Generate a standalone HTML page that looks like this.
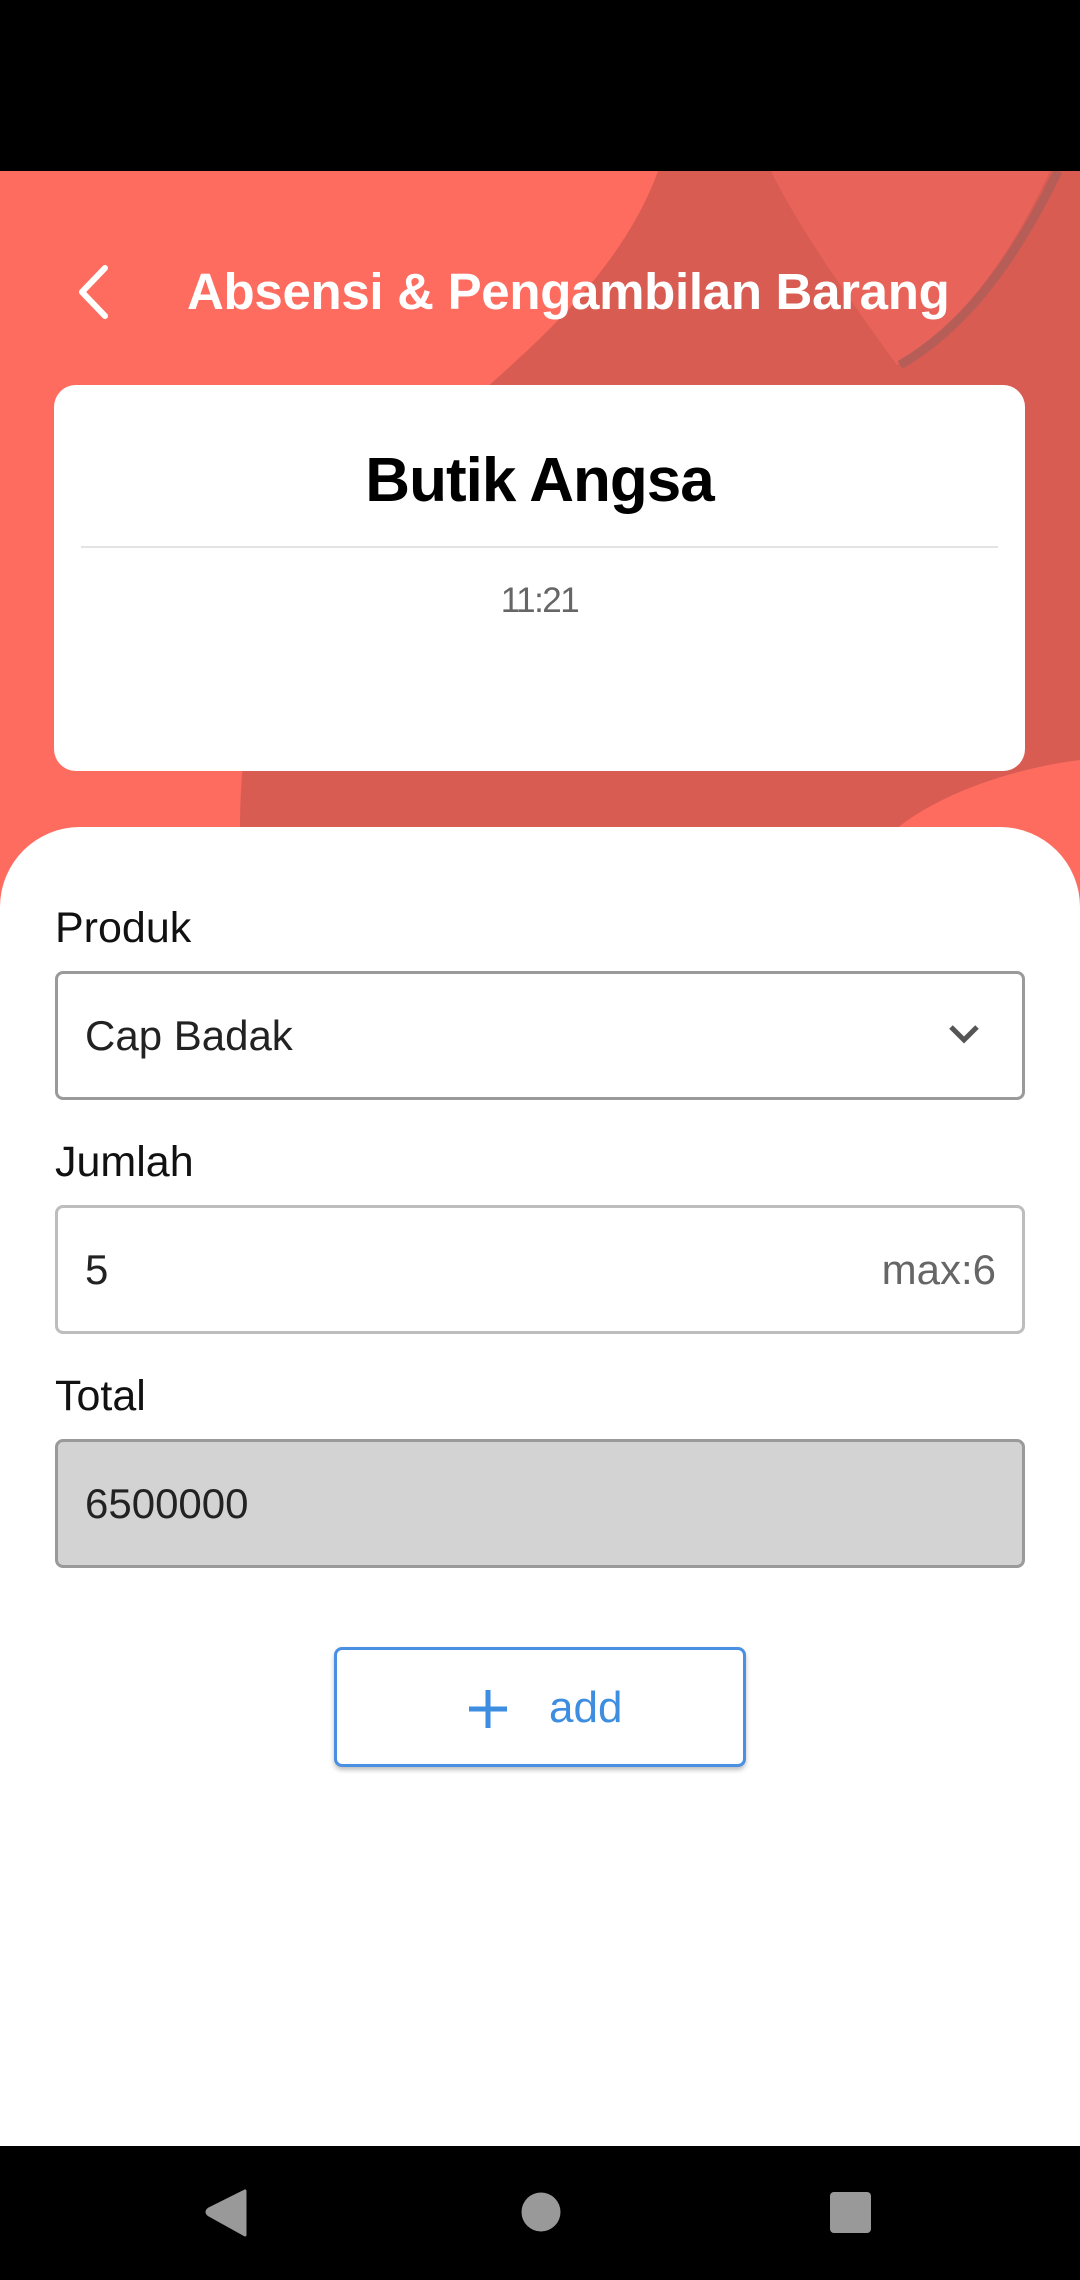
<!DOCTYPE html>
<html><head><meta charset="utf-8"><style>
*{margin:0;padding:0;box-sizing:border-box}
body{width:1080px;height:2280px;position:relative;overflow:hidden;background:#fff;font-family:"Liberation Sans",sans-serif}
.abs{position:absolute}
.lbl{position:absolute;left:55px;font-size:43px;color:#111}
.inp{position:absolute;left:55px;width:970px;height:129px;border:3px solid #9a9a9a;border-radius:8px;background:#fff}
.inp span{position:absolute;left:27px;top:50%;transform:translateY(-50%);font-size:42px;color:#222}
</style></head><body>
<div class="abs" style="left:0;top:0;width:1080px;height:171px;background:#000"></div>
<svg class="abs" style="left:0;top:171px" width="1080" height="829" viewBox="0 171 1080 829">
<rect x="0" y="171" width="1080" height="829" fill="#fe6c5f"/>
<path d="M658,171 L1080,171 L1080,760 C1000,770 930,800 895,830 L240,830 L240,1000 L240,830 C240,700 270,620 330,540 C420,420 600,330 658,171 Z" fill="#d95c53"/>
<path d="M771,171 L1050,171 C1000,280 940,340 897,365 C850,300 800,230 771,171 Z" fill="#e8645a"/>
<path d="M1058,171 C1010,270 960,330 900,365" stroke="#b65d57" stroke-width="9" fill="none"/>
</svg>
<svg class="abs" style="left:74px;top:264px" width="40" height="56" viewBox="0 0 40 56"><path d="M31,4 L8,28 L31,52" stroke="#fff" stroke-width="6" fill="none" stroke-linecap="round" stroke-linejoin="round"/></svg>
<div class="abs" style="left:187px;top:262px;font-size:51px;font-weight:bold;color:#fff;letter-spacing:-0.3px;white-space:nowrap">Absensi &amp; Pengambilan Barang</div>
<div class="abs" style="left:54px;top:385px;width:971px;height:386px;background:#fff;border-radius:22px">
<div style="position:absolute;top:60px;width:100%;text-align:center;font-size:62px;font-weight:bold;color:#000;letter-spacing:-1px">Butik Angsa</div>
<div style="position:absolute;left:27px;right:27px;top:161px;height:2px;background:#e3e3e3"></div>
<div style="position:absolute;top:196px;width:100%;text-align:center;font-size:35px;color:#666;letter-spacing:-1.5px">11:21</div>
</div>
<div class="abs" style="left:0;top:827px;width:1080px;height:1330px;background:#fff;border-radius:80px 80px 0 0"></div>
<div class="lbl" style="top:904px">Produk</div>
<div class="inp" style="top:971px"><span>Cap Badak</span>
<svg style="position:absolute;right:40px;top:48px" width="36" height="24" viewBox="0 0 36 24"><path d="M5,5 L18,18 L31,5" stroke="#555" stroke-width="5" fill="none"/></svg></div>
<div class="lbl" style="top:1138px">Jumlah</div>
<div class="inp" style="top:1205px;border-color:#bdbdbd"><span>5</span><span style="left:auto;right:26px;color:#666">max:6</span></div>
<div class="lbl" style="top:1372px">Total</div>
<div class="inp" style="top:1439px;background:#d3d3d3"><span>6500000</span></div>
<div class="abs" style="left:334px;top:1647px;width:412px;height:120px;border:3px solid #4a90e2;border-radius:8px;box-shadow:0 3px 5px rgba(0,0,0,0.25);background:#fff">
<svg style="position:absolute;left:130px;top:38px" width="42" height="42" viewBox="0 0 42 42"><path d="M21,2 V40 M2,21 H40" stroke="#3d8ee0" stroke-width="5"/></svg>
<div style="position:absolute;left:212px;top:33px;font-size:44px;color:#3d8ee0">add</div>
</div>
<div class="abs" style="left:0;top:2146px;width:1080px;height:134px;background:#000"></div>
<svg class="abs" style="left:0;top:2146px" width="1080" height="134">
<path d="M245,45 L245,89 L209,69 Q205,66 209,63 Z" fill="#999" stroke="#999" stroke-width="3" stroke-linejoin="round"/>
<circle cx="541" cy="66" r="19.5" fill="#999"/>
<rect x="830" y="46" width="41" height="41" rx="4" fill="#999"/>
</svg>
</body></html>
